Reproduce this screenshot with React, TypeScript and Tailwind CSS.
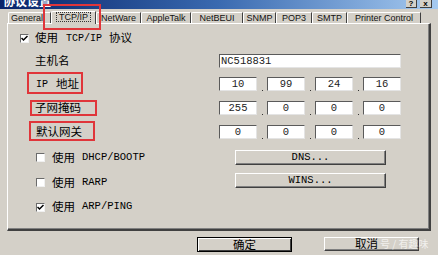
import React from "react";

const CJK = "font-['Noto_Sans_CJK_SC','Liberation_Sans',sans-serif]";
const MONO = "font-['Liberation_Mono','Noto_Sans_CJK_SC',monospace]";
const SANS = "font-['Liberation_Sans',Arial,sans-serif]";

function CheckBox({ checked }: { checked?: boolean }) {
  return (
    <div className="w-[9px] h-[9px] bg-white border-t border-l border-t-[#6b6b6b] border-l-[#6b6b6b] border-b border-r border-b-[#f0f0f0] border-r-[#f0f0f0] flex items-center justify-center shrink-0">
      {checked && (
        <svg width="7" height="7" viewBox="0 0 7 7">
          <path d="M0.5 3 L2.5 5 L6.5 1" stroke="#000" strokeWidth="1.5" fill="none" />
        </svg>
      )}
    </div>
  );
}

function Field({ w, children, align = "center" }: { w: string; children: React.ReactNode; align?: "center" | "left" }) {
  return (
    <div
      className={`${w} h-[14px] bg-white border-t border-l border-t-[#5a5a5a] border-l-[#5a5a5a] border-b border-r border-b-[#e4e4e4] border-r-[#e4e4e4] flex items-center ${
        align === "center" ? "justify-center" : "justify-start pl-[1px]"
      } ${MONO} text-[10.5px] leading-none text-[#222]`}
    >
      {children}
    </div>
  );
}

function IpRow({ values }: { values: string[] }) {
  return (
    <div className="flex items-end">
      {values.map((v, i) => (
        <React.Fragment key={i}>
          {i > 0 && (
            <div className="w-[10px] h-[14px] flex items-end justify-center">
              <div className="w-[1px] h-[1px] bg-[#333]" />
            </div>
          )}
          <Field w="w-[38px]">{v}</Field>
        </React.Fragment>
      ))}
    </div>
  );
}

function RaisedButton({ w, children }: { w: string; children: React.ReactNode }) {
  return (
    <div
      className={`${w} h-[15px] bg-[#d4d0c8] border-t border-l border-t-white border-l-white border-b border-r border-b-[#404040] border-r-[#404040] shadow-[inset_-1px_-1px_0_#808080] flex items-center justify-center ${MONO} text-[10.5px] leading-none`}
    >
      {children}
    </div>
  );
}

const tabs: { label: string; w: string; sel?: boolean; extra?: string }[] = [
  { label: "General", w: "w-[43px]", extra: "pr-[5px]" },
  { label: "TCP/IP", w: "w-[45px]", sel: true },
  { label: "NetWare", w: "w-[45px]" },
  { label: "AppleTalk", w: "w-[50px]" },
  { label: "NetBEUI", w: "w-[52px]" },
  { label: "SNMP", w: "w-[33px]" },
  { label: "POP3", w: "w-[36px]" },
  { label: "SMTP", w: "w-[35px]" },
  { label: "Printer Control", w: "w-[74px]" },
];

export default function App() {
  return (
    <div className={`relative w-[438px] h-[255px] overflow-hidden bg-[#d4d0c8] text-black ${CJK}`}>
      {/* Title bar */}
      <div className="h-[9px] flex items-start overflow-hidden bg-gradient-to-r from-[#0a246a] via-[#3a6ab0] to-[#a6caf0]">
        <span className={`ml-[3px] -mt-[5px] text-[12px] leading-[12px] font-bold text-white ${CJK}`}>协议设置</span>
        <div className="ml-auto mr-[6px] flex gap-[3px]">
          <div className={`w-[11px] h-[8px] bg-[#d4d0c8] border-b border-r border-b-[#404040] border-r-[#404040] flex items-center justify-center ${SANS} text-[8px] font-bold leading-[7px]`}>?</div>
          <div className={`w-[12px] h-[8px] bg-[#d4d0c8] border-b border-r border-b-[#404040] border-r-[#404040] flex items-center justify-center ${SANS} text-[8px] font-bold leading-[7px]`}>x</div>
        </div>
      </div>

      {/* Tabs */}
      <div className="h-[14px] flex items-end pl-[8px]">
        {tabs.map((t) => (
          <div
            key={t.label}
            className={`${t.w} ${t.extra ?? ""} ${
              t.sel ? "h-[13px] -mb-[1px] relative z-10 pb-[2px]" : "h-[11px]"
            } bg-[#d4d0c8] border-t border-l border-t-white border-l-white border-r border-r-[#404040] rounded-tl-[2px] flex items-center justify-center ${SANS} text-[9px] leading-none text-[#111] whitespace-nowrap`}
          >
            {t.sel ? (
              <span className="border border-dotted border-[#333] px-[2px] leading-[8px]">{t.label}</span>
            ) : (
              t.label
            )}
          </div>
        ))}
      </div>

      {/* Panel */}
      <div className="ml-[7px] w-[424px] h-[208px] border-t border-l border-t-white border-l-white border-r-2 border-b-2 border-r-[#404040] border-b-[#404040] shadow-[inset_-1px_-1px_0_#808080] flex flex-col">
        <div className="mt-[7px] h-[14px] flex items-center pl-[12px] text-[11.5px]">
          <CheckBox checked />
          <span className="ml-[6px]">使用</span>
          <span className={`ml-[8px] ${MONO} text-[10px]`}>TCP/IP</span>
          <span className="ml-[7px]">协议</span>
        </div>

        <div className="mt-[9px] h-[14px] flex items-center">
          <div className="w-[211px] pl-[27px] text-[11.5px]">主机名</div>
          <Field w="w-[182px]" align="left">NC518831</Field>
        </div>

        <div className="mt-[9px] h-[14px] flex items-center">
          <div className="w-[211px] pl-[28px] text-[11.5px] flex items-center">
            <span className={`${MONO} text-[10px]`}>IP</span>
            <span className="ml-[8px]">地址</span>
          </div>
          <IpRow values={["10", "99", "24", "16"]} />
        </div>

        <div className="mt-[10px] h-[14px] flex items-center">
          <div className="w-[211px] pl-[27px] text-[11.5px]">子网掩码</div>
          <IpRow values={["255", "0", "0", "0"]} />
        </div>

        <div className="mt-[10px] h-[14px] flex items-center">
          <div className="w-[211px] pl-[28px] text-[11.5px]">默认网关</div>
          <IpRow values={["0", "0", "0", "0"]} />
        </div>

        <div className="mt-[11px] h-[15px] flex items-center">
          <div className="w-[227px] pl-[28px] flex items-center text-[11.5px]">
            <CheckBox />
            <span className="ml-[7px]">使用</span>
            <span className={`ml-[7px] ${MONO} text-[10.5px]`}>DHCP/BOOTP</span>
          </div>
          <RaisedButton w="w-[151px]">DNS...</RaisedButton>
        </div>

        <div className="mt-[8px] h-[15px] flex items-center">
          <div className="w-[227px] pl-[28px] flex items-center text-[11.5px] pt-[4px]">
            <CheckBox />
            <span className="ml-[7px]">使用</span>
            <span className={`ml-[7px] ${MONO} text-[10.5px]`}>RARP</span>
          </div>
          <RaisedButton w="w-[151px]">WINS...</RaisedButton>
        </div>

        <div className="mt-[12px] h-[14px] flex items-center">
          <div className="pl-[28px] flex items-center text-[11.5px]">
            <CheckBox checked />
            <span className="ml-[7px]">使用</span>
            <span className={`ml-[7px] ${MONO} text-[10.5px]`}>ARP/PING</span>
          </div>
        </div>
      </div>

      {/* Bottom buttons */}
      <div className="mt-[6px] flex items-start">
        <div className="ml-[197px] w-[95px] h-[15px] border border-black bg-[#d4d0c8] shadow-[inset_1px_1px_0_#fff,inset_-1px_-1px_0_#404040] flex items-center justify-center text-[11.5px] leading-none">
          确定
        </div>
        <div className="ml-[32px] w-[95px] h-[14px] bg-[#d4d0c8] border-t border-l border-t-white border-l-white border-b border-r border-b-[#404040] border-r-[#404040] shadow-[inset_-1px_-1px_0_#808080] flex items-center justify-center pr-[10px] text-[11.5px] leading-none">
          取消
        </div>
      </div>

      {/* watermark */}
      <div className="absolute left-[380px] top-[239px] text-[10px] leading-none text-white/70 whitespace-nowrap">
        号 / 有趣味
      </div>

      {/* red annotation boxes */}
      <div className="absolute left-[43px] top-[4px] w-[58px] h-[26px] border-2 border-[#e0353a]" />
      <div className="absolute left-[27px] top-[72px] w-[56px] h-[22px] border-2 border-[#e0353a]" />
      <div className="absolute left-[30px] top-[100px] w-[67px] h-[16px] border-2 border-[#e0353a]" />
      <div className="absolute left-[29px] top-[121px] w-[66px] h-[20px] border-2 border-[#e0353a]" />
    </div>
  );
}
